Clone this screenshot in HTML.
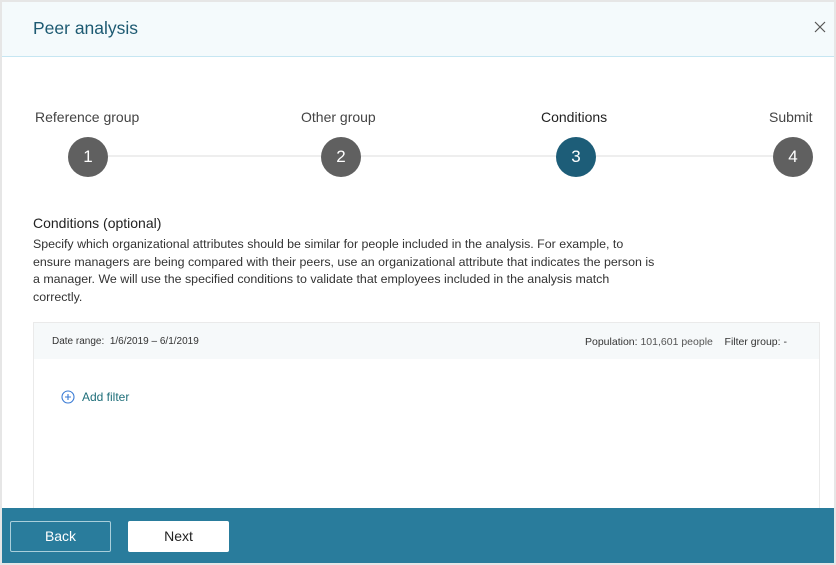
<!DOCTYPE html>
<html><head><style>
body{margin:0;width:836px;height:565px;background:#e6e6e6;font-family:"Liberation Sans",sans-serif;position:relative;overflow:hidden}
.p{position:absolute;left:2px;top:2px;width:832px;height:561px;background:#fff}
.a{position:absolute}
.hd{left:0;top:0;width:832px;height:54px;background:#f4fafc;border-bottom:1px solid #c6e6f2}
.t{position:absolute;white-space:nowrap}
.c{position:absolute;width:40px;height:40px;border-radius:50%;background:#606060;color:#fff;font-size:17px;text-align:center;line-height:40px}
</style></head><body>
<div class="p">
<div class="a hd"></div>
<div class="t" style="left:31px;top:16px;font-size:17.5px;color:#1d5a72">Peer analysis</div>
<svg class="a" style="left:812px;top:19px" width="12" height="12"><path d="M1 1L11 11M11 1L1 11" stroke="#555" stroke-width="1.2"/></svg>
<div class="a" style="left:86px;top:153px;width:706px;height:2px;background:#eee"></div>
<div class="t" style="left:33px;top:107px;font-size:14px;color:#444">Reference group</div>
<div class="t" style="left:299px;top:107px;font-size:14px;color:#444">Other group</div>
<div class="t" style="left:539px;top:107px;font-size:14px;color:#222">Conditions</div>
<div class="t" style="left:767px;top:107px;font-size:14px;color:#444">Submit</div>
<div class="c" style="left:66px;top:135px">1</div>
<div class="c" style="left:319px;top:135px">2</div>
<div class="c" style="left:554px;top:135px;background:#1d5d78">3</div>
<div class="c" style="left:771px;top:135px">4</div>
<div class="t" style="left:31px;top:213px;font-size:14px;color:#222">Conditions (optional)</div>
<div class="a" style="left:31px;top:234px;width:628px;font-size:12.4px;line-height:17.5px;color:#333">Specify which organizational attributes should be similar for people included in the analysis. For example, to ensure managers are being compared with their peers, use an organizational attribute that indicates the person is a manager. We will use the specified conditions to validate that employees included in the analysis match correctly.</div>
<div class="a" style="left:31px;top:320px;width:785px;height:200px;border:1px solid #eaeaea;background:#fff"></div>
<div class="a" style="left:32px;top:321px;width:785px;height:36px;background:#f6f9fa"></div>
<div class="t" style="left:50px;top:334px;font-size:10px;color:#333">Date range:&nbsp; 1/6/2019 – 6/1/2019</div>
<div class="t" style="left:583px;top:334px;font-size:10.5px;color:#333">Population: <span style="color:#555">101,601 people</span>&nbsp;&nbsp;&nbsp; Filter group: -</div>
<svg class="a" style="left:59px;top:388px" width="14" height="14"><circle cx="7" cy="7" r="6" fill="none" stroke="#3a7bd5" stroke-width="1.1"/><path d="M7 4v6M4 7h6" stroke="#3a7bd5" stroke-width="1.1"/></svg>
<div class="t" style="left:80px;top:388px;font-size:12px;color:#1f6f7a">Add filter</div>
<div class="a" style="left:0;top:506px;width:832px;height:55px;background:#297c9c"></div>
<div class="a" style="left:8px;top:519px;width:99px;height:29px;border:1px solid #a9cfdb;border-radius:2px;color:#fff;font-size:14px;text-align:center;line-height:29px">Back</div>
<div class="a" style="left:126px;top:519px;width:101px;height:31px;background:#fff;border-radius:2px;color:#222;font-size:14px;text-align:center;line-height:31px">Next</div>
</div>
</body></html>
